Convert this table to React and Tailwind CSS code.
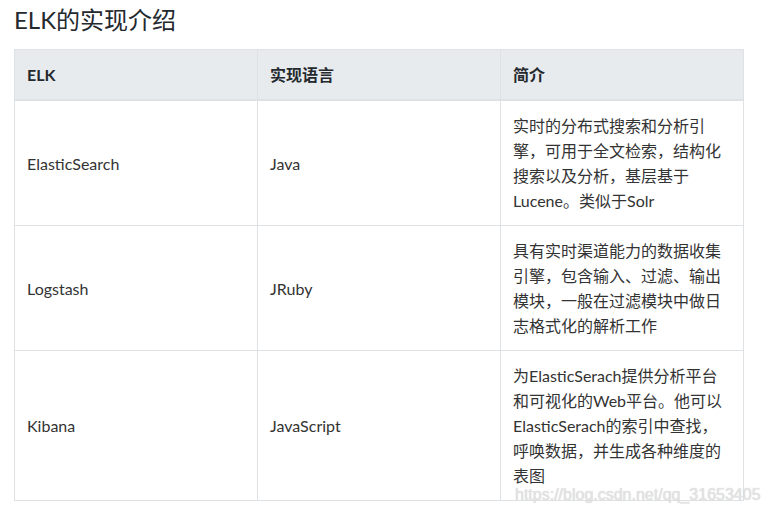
import React from 'react';

const rows = [
  {
    name: 'ElasticSearch',
    lang: 'Java',
    desc: '实时的分布式搜索和分析引擎，可用于全文检索，结构化搜索以及分析，基层基于Lucene。类似于Solr',
  },
  {
    name: 'Logstash',
    lang: 'JRuby',
    desc: '具有实时渠道能力的数据收集引擎，包含输入、过滤、输出模块，一般在过滤模块中做日志格式化的解析工作',
  },
  {
    name: 'Kibana',
    lang: 'JavaScript',
    desc: '为ElasticSerach提供分析平台和可视化的Web平台。他可以ElasticSerach的索引中查找，呼唤数据，并生成各种维度的表图',
  },
];

export default function App() {
  return (
    <div
      className="relative w-[766px] h-[516px] overflow-hidden bg-white pl-[14px] pt-1 text-[#333]"
      style={{ fontFamily: 'Lato, "Noto Sans CJK SC", sans-serif' }}
    >
      <h2 className="text-[24px] leading-[32px] text-[#24292e] mb-[13px]">ELK的实现介绍</h2>

      <table className="table-fixed w-[729px] border-collapse text-[16px] leading-[25px]">
        <thead>
          <tr className="bg-[#e8ebee]">
            <th className="w-[243px] border border-[#dfe2e5] border-b-2 px-3 py-3 text-left font-bold text-[#24292e]">ELK</th>
            <th className="w-[243px] border border-[#dfe2e5] border-b-2 px-3 py-3 text-left font-bold text-[#24292e]">实现语言</th>
            <th className="w-[243px] border border-[#dfe2e5] border-b-2 px-3 py-3 text-left font-bold text-[#24292e]">简介</th>
          </tr>
        </thead>
        <tbody>
          {rows.map((r) => (
            <tr key={r.name}>
              <td className="border border-[#dfe2e5] px-3 py-3 align-middle">{r.name}</td>
              <td className="border border-[#dfe2e5] px-3 py-3 align-middle">{r.lang}</td>
              <td className="border border-[#dfe2e5] pl-3 pr-4 py-3 align-middle">{r.desc}</td>
            </tr>
          ))}
        </tbody>
      </table>

      {/* watermark */}
      <div
        className="absolute left-[515px] top-[485px] text-[16px] leading-[20px] text-[#e4e4e4] [text-shadow:0_0_1px_#c8c8c8]"
        style={{ fontFamily: '"Liberation Sans", sans-serif' }}
      >
        https://blog.csdn.net/qq_31653405
      </div>
    </div>
  );
}
